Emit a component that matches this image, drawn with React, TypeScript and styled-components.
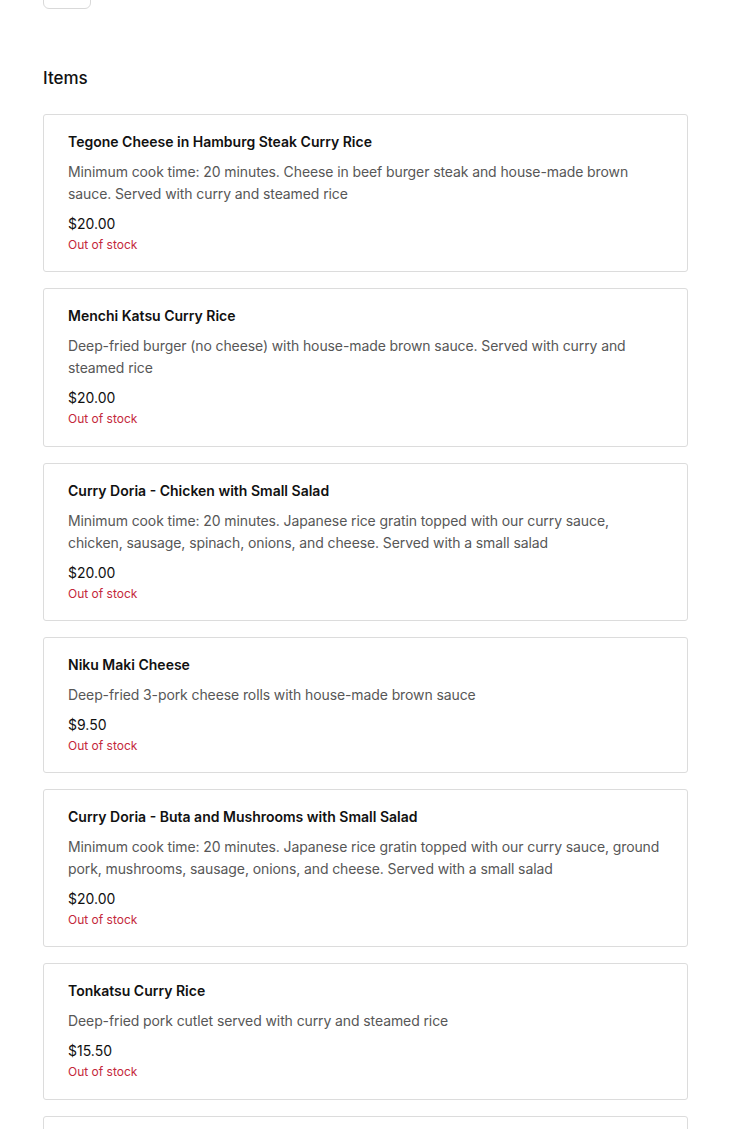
import styled, { createGlobalStyle } from "styled-components";

const GlobalStyle = createGlobalStyle`
  html, body {
    margin: 0;
    padding: 0;
    background: #ffffff;
  }
  body {
    font-family: Inter, "Noto Sans", "Liberation Sans", sans-serif;
    color: #111111;
    -webkit-font-smoothing: antialiased;
  }
`;

interface Item {
  name: string;
  description: string;
  price: string;
}

const items: Item[] = [
  {
    name: "Tegone Cheese in Hamburg Steak Curry Rice",
    description:
      "Minimum cook time: 20 minutes. Cheese in beef burger steak and house-made brown sauce. Served with curry and steamed rice",
    price: "$20.00",
  },
  {
    name: "Menchi Katsu Curry Rice",
    description:
      "Deep-fried burger (no cheese) with house-made brown sauce. Served with curry and steamed rice",
    price: "$20.00",
  },
  {
    name: "Curry Doria - Chicken with Small Salad",
    description:
      "Minimum cook time: 20 minutes. Japanese rice gratin topped with our curry sauce, chicken, sausage, spinach, onions, and cheese. Served with a small salad",
    price: "$20.00",
  },
  {
    name: "Niku Maki Cheese",
    description: "Deep-fried 3-pork cheese rolls with house-made brown sauce",
    price: "$9.50",
  },
  {
    name: "Curry Doria - Buta and Mushrooms with Small Salad",
    description:
      "Minimum cook time: 20 minutes. Japanese rice gratin topped with our curry sauce, ground pork, mushrooms, sausage, onions, and cheese. Served with a small salad",
    price: "$20.00",
  },
  {
    name: "Tonkatsu Curry Rice",
    description: "Deep-fried pork cutlet served with curry and steamed rice",
    price: "$15.50",
  },
  {
    name: "Chicken Katsu Curry Rice",
    description: "Deep-fried chicken cutlet served with curry and steamed rice",
    price: "$15.50",
  },
];

const Page = styled.div`
  width: 645px;
  margin: -27px 0 0 43px;
  padding-bottom: 40px;
`;

const BackButton = styled.button`
  display: block;
  width: 48px;
  height: 36px;
  padding: 0;
  border: 1px solid #d9d9d9;
  border-radius: 6px;
  background: #ffffff;
`;

const Heading = styled.h2`
  margin: 57px 0 24px;
  font-size: 17px;
  line-height: 24px;
  font-weight: 500;
  color: #111111;
`;

const List = styled.div`
  display: flex;
  flex-direction: column;
  gap: 16px;
`;

const Card = styled.div`
  border: 1px solid #dcdcdc;
  border-radius: 3px;
  padding: 17px 24px 16.25px;
  display: flex;
  flex-direction: column;
`;

const Title = styled.div`
  font-size: 14px;
  line-height: 20px;
  font-weight: 600;
  color: #111111;
  margin-bottom: 9px;
`;

const Description = styled.div`
  font-size: 14px;
  line-height: 22px;
  letter-spacing: -0.1px;
  color: #575757;
  margin-bottom: 8px;
`;

const Price = styled.div`
  font-size: 14px;
  line-height: 22px;
  color: #111111;
`;

const Stock = styled.div`
  font-size: 12px;
  line-height: 20px;
  color: #c4283b;
`;

export default function App() {
  return (
    <>
      <GlobalStyle />
      <Page>
        <BackButton aria-label="Back" />
        <Heading>Items</Heading>
        <List>
          {items.map((item) => (
            <Card key={item.name}>
              <Title>{item.name}</Title>
              <Description>{item.description}</Description>
              <Price>{item.price}</Price>
              <Stock>Out of stock</Stock>
            </Card>
          ))}
        </List>
      </Page>
    </>
  );
}
